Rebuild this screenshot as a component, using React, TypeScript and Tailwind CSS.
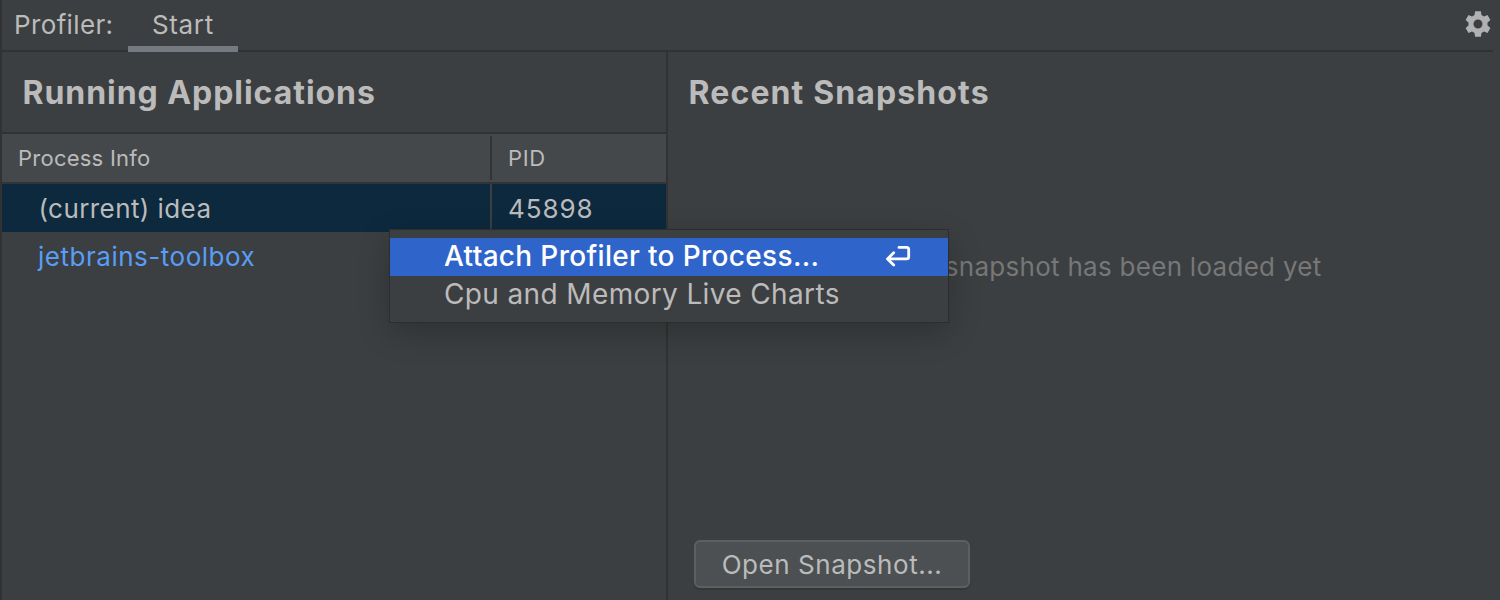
function GearIcon() {
  return (
    <svg className="block size-[26px]" viewBox="-13 -13 26 26" fill="#afb1b3">
      <path
        fillRule="evenodd"
        d="M-2.900-12.800H2.900L3.500-9L6-7.600L9.500-9L12.400-3.900L9.500-1.500V1.500L12.400 3.900L9.500 9L6 7.600L3.500 9L2.900 12.800H-2.900L-3.500 9L-6 7.600L-9.500 9L-12.400 3.900L-9.500 1.500V-1.500L-12.400-3.900L-9.500-9L-6-7.600L-3.500-9ZM0-4.500A4.500 4.500 0 1 0 0 4.500A4.500 4.500 0 0 0 0-4.500Z"
      />
    </svg>
  );
}

function EnterIcon() {
  return (
    <svg
      className="block h-[22px] w-[26px]"
      viewBox="0 0 26 22"
      fill="none"
      stroke="#fff"
      strokeWidth="2.8"
      strokeLinecap="round"
      strokeLinejoin="round"
    >
      <path d="M14 1.400H21.500Q23.700 1.400 23.700 3.600V10.700Q23.700 12.900 21.500 12.900H2.500M8.700 6.700L2.500 12.900L8.700 19.100" />
    </svg>
  );
}

function TabBar() {
  return (
    <header className="flex h-[52px] shrink-0">
      <div className="mr-[7px] flex flex-1 border-b-2 border-[#323232]">
        <span className="w-[126px] pl-3 text-[26px] leading-[50px] tracking-[0.36px]">Profiler:</span>
        <div className="-mb-0.5 h-[52px] w-[110px] border-b-6 border-[#747a80] pl-6 text-[26px] leading-[50px] tracking-[0.65px]">
          Start
        </div>
        <div className="mt-[11px] mr-0.5 ml-auto">
          <GearIcon />
        </div>
      </div>
    </header>
  );
}

function RunningApplications() {
  return (
    <section className="flex w-[666px] shrink-0 flex-col border-r-2 border-[#323232]">
      <h2 className="h-[82px] border-b-2 border-[#323232] pl-[20.500px] text-[32px] leading-[82px] font-bold tracking-[0.95px]">
        Running Applications
      </h2>
      <div className="flex h-[50px] items-center border-b-2 border-[#323537] bg-[#45484a] text-[22px] leading-[48px]">
        <span className="h-11 w-[490px] border-r-2 border-[#323537] pl-4 leading-[45px] tracking-[0.24px]">Process Info</span>
        <span className="pl-4 leading-[45px] tracking-[0.6px]">PID</span>
      </div>
      <div className="flex h-12 bg-[#0d293e] text-[26px] leading-[49px]">
        <span className="w-[490px] border-r-2 border-[#3c3f41] pl-[36.500px] tracking-[0.42px]">(current) idea</span>
        <span className="pl-4 tracking-[0.9px]">45898</span>
      </div>
      <div className="h-12 pl-9 text-[26px] leading-[49px] tracking-[0.52px] text-[#589df6]">jetbrains-toolbox</div>
    </section>
  );
}

function RecentSnapshots() {
  return (
    <section className="flex flex-1 flex-col">
      <h2 className="pl-[20.500px] text-[32px] leading-[82px] font-bold tracking-[1.12px]">Recent Snapshots</h2>
      <p className="mt-[108px] pr-[178.500px] text-right text-[26px] leading-[49px] tracking-[0.28px] text-[#777777]">
        No snapshot has been loaded yet
      </p>
      <button className="mt-auto mb-3 ml-[26px] h-12 w-[276px] rounded-md border-2 border-[#5e6060] bg-[#4c5052] pt-px text-[26px] leading-[43px] tracking-[0.55px] shadow-[0_2px_1px_#353739]">
        Open Snapshot...
      </button>
    </section>
  );
}

function ContextMenu() {
  return (
    <div className="absolute top-[230px] left-[390px] w-[558px] bg-[#3c3f41] py-2 text-[28px] leading-[36px] shadow-[0_0_0_1px_#2b2d2e,0_10px_32px_rgba(0,0,0,0.24)]">
      <div className="flex h-[38px] justify-between bg-[#2f65ca] pr-[37px] pl-[54px] font-medium tracking-[0.33px] text-white">
        <span>Attach Profiler to Process...</span>
        <div className="pt-2">
          <EnterIcon />
        </div>
      </div>
      <div className="h-[38px] pl-[54px] tracking-[0.37px]">Cpu and Memory Live Charts</div>
    </div>
  );
}

export default function App() {
  return (
    <div className="relative flex h-[600px] w-[1500px] flex-col overflow-hidden border-l-2 border-[#323232] bg-[#3c3f41] font-['Inter',sans-serif] text-[#bbbbbb]">
      <TabBar />
      <main className="flex flex-1">
        <RunningApplications />
        <RecentSnapshots />
      </main>
      <div className="absolute top-0 -left-0.5">
        <ContextMenu />
      </div>
    </div>
  );
}
